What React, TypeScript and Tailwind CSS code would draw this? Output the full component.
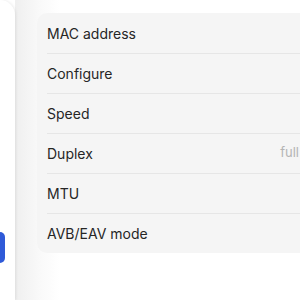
const rows = [
  { label: "MAC address", value: "" },
  { label: "Configure", value: "" },
  { label: "Speed", value: "" },
  { label: "Duplex", value: "full" },
  { label: "MTU", value: "" },
  { label: "AVB/EAV mode", value: "" },
];

export default function App() {
  return (
    <div className="flex h-[300px] w-[300px] overflow-hidden bg-white font-['Inter',sans-serif]">
      <aside className="relative z-10 flex h-full w-[15px] shrink-0 flex-col rounded-tr-[22px] bg-white shadow-[1px_0_3px_rgba(0,0,0,0.08)]">
        <button className="mt-[232px] h-[31px] w-[5px] rounded-r-[6px] bg-[#2f5ad8]" />
      </aside>
      <main className="flex-1 bg-[linear-gradient(90deg,#efefef_0px,#f9f9f9_24px,#ffffff_45px)] pl-[22px] pt-[13px]">
        <div className="w-[290px] shrink-0 rounded-[10px] bg-[#f5f5f5] pl-[10px]">
          {rows.map((r, i) => (
            <div
              key={r.label}
              className={
                "flex h-[40px] items-center justify-between pr-[28px] text-[14px] text-[#262626] " +
                (i > 0 ? "border-t border-[#e6e6e6]" : "")
              }
            >
              <span>{r.label}</span>
              {r.value && <span className="-mt-[2px] text-[13px] text-[#b4b4b4]">{r.value}</span>}
            </div>
          ))}
        </div>
      </main>
    </div>
  );
}
